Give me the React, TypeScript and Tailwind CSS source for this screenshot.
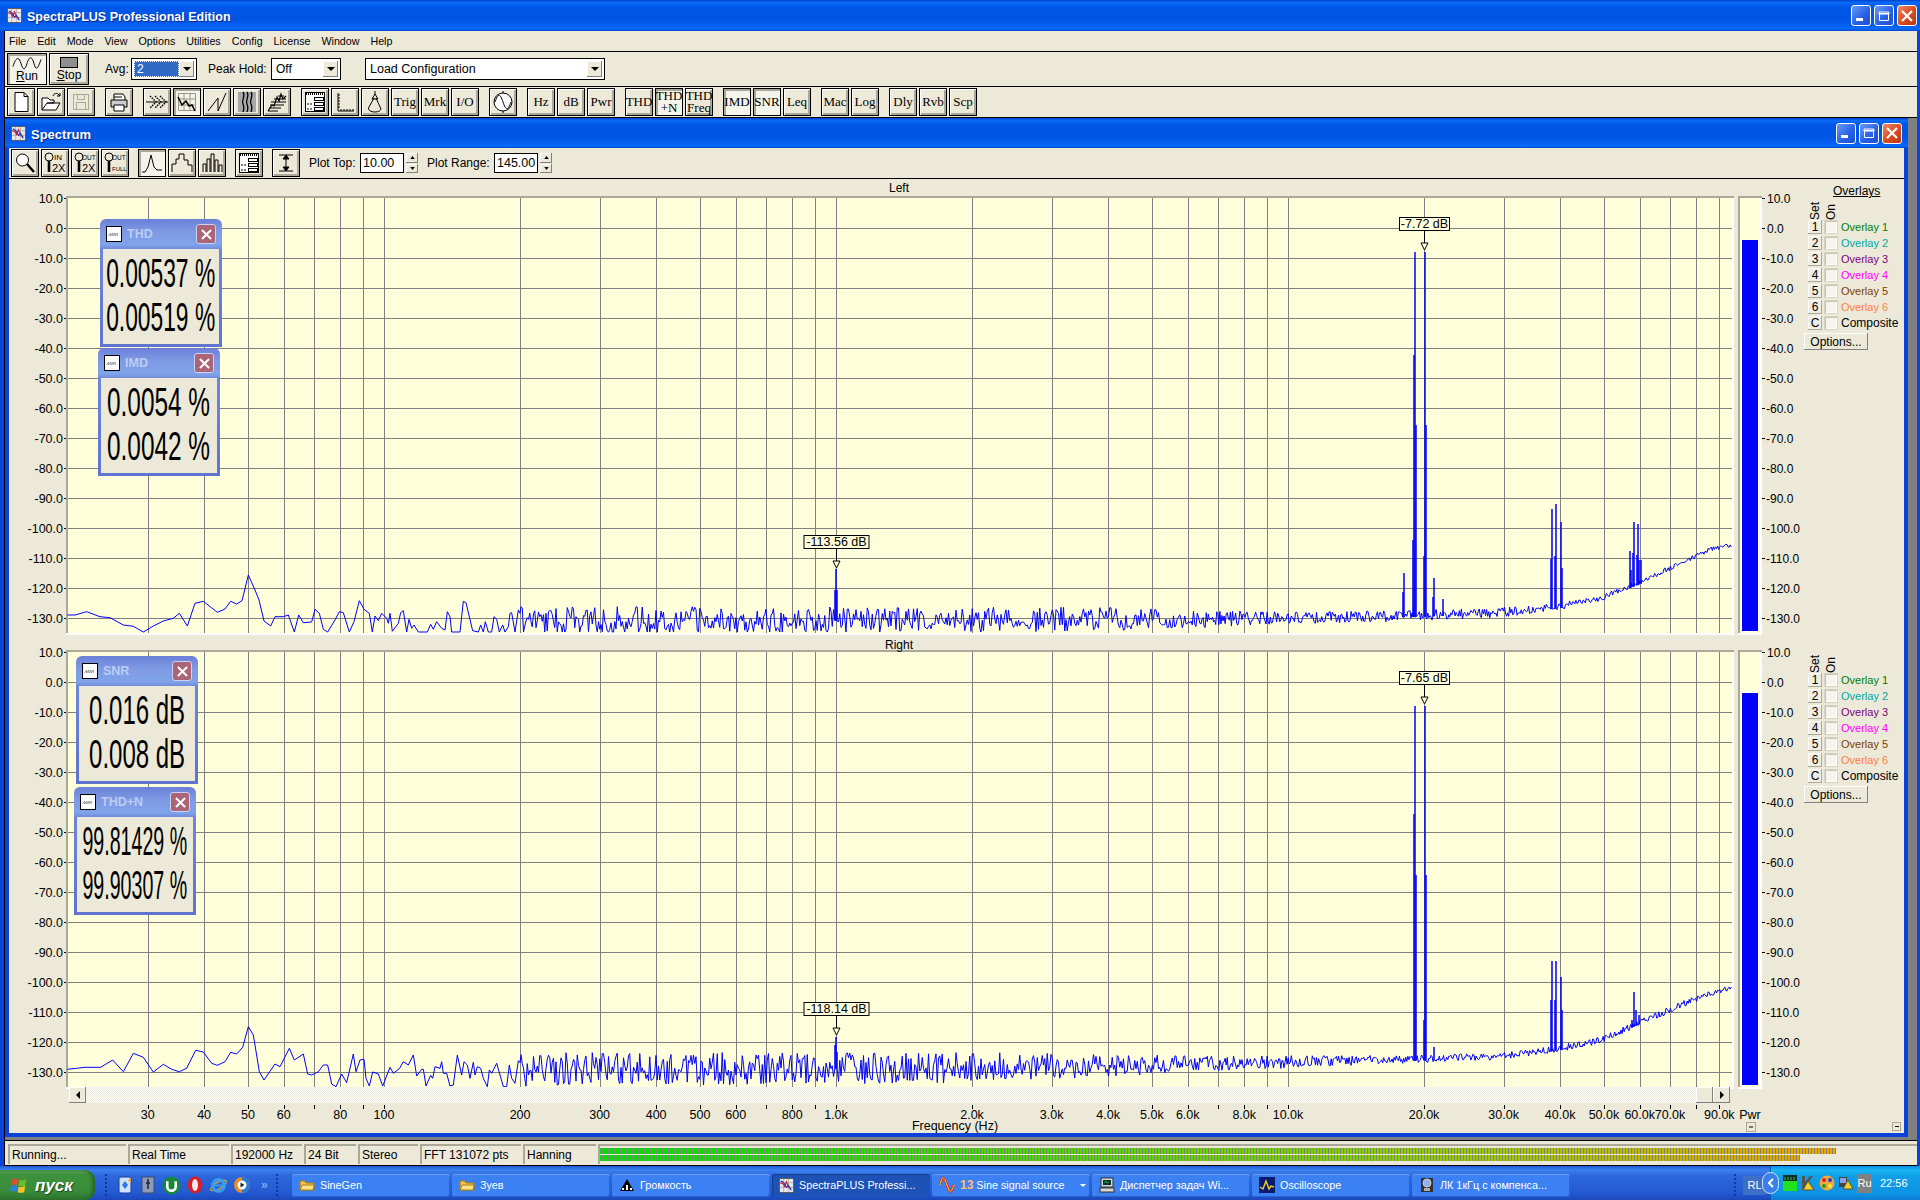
import React from "react";

const xOf = (f: number) => 384 + 452 * (Math.log10(f) - 2);
const gridFreqs: number[] = [];
[10, 100, 1000, 10000].forEach((d) => {
  for (let m = d === 10 ? 3 : 1; m <= 9; m++) gridFreqs.push(m * d);
});

type P = [number, number];
const lerp = (tbl: P[], x: number) => {
  if (x <= tbl[0][0]) return tbl[0][1];
  for (let i = 1; i < tbl.length; i++) {
    if (x <= tbl[i][0]) {
      const [a, b] = tbl[i - 1];
      const [c, d] = tbl[i];
      return b + ((d - b) * (x - a)) / (c - a);
    }
  }
  return tbl[tbl.length - 1][1];
};
const rngOf = (seed: number) => () => {
  seed = (seed + 0x6d2b79f5) | 0;
  let t = Math.imul(seed ^ (seed >>> 15), 1 | seed);
  t = (t + Math.imul(t ^ (t >>> 7), 61 | t)) ^ t;
  return ((t ^ (t >>> 14)) >>> 0) / 4294967296;
};

const lowL: P[] = [[22,165],[45,165],[80,155],[120,170],[150,173],[190,195],[220,199],[250,216],[280,198],[310,183],[340,175],[358,160],[382,198],[405,130],[430,124],[472,157],[495,147],[512,124],[530,132],[546,122],[565,45],[585,90],[597,120],[612,183],[632,198],[645,170],[670,170],[685,165],[703,216],[716,165],[730,188],[755,186],[765,148],[778,160],[790,208],[803,216],[825,180],[838,155],[850,158],[868,216],[882,185],[898,122],[912,148],[928,160],[937,216],[945,168],[955,182],[965,160],[980,175],[985,190],[990,160],[997,214],[1015,190],[1022,158],[1030,152],[1040,216],[1047,178],[1055,205],[1062,195],[1075,216],[1102,216],[1112,193],[1120,208],[1130,185],[1145,205],[1155,210],[1162,155],[1170,170],[1175,216],[1200,216],[1210,124],[1218,128],[1238,212],[1255,216],[1262,195],[1270,216],[1276,185],[1285,216],[1295,216],[1302,170],[1310,178],[1318,216],[1328,195],[1335,216],[1345,200],[1350,160],[1355,158],[1365,216],[1375,150],[1380,160]];
const lowR: P[] = [[22,178],[50,175],[75,172],[122,172],[158,150],[190,185],[220,130],[250,142],[280,186],[310,163],[335,178],[358,185],[380,175],[407,121],[430,126],[455,160],[472,166],[495,155],[512,127],[530,132],[548,112],[565,50],[580,75],[598,185],[612,210],[645,162],[660,170],[688,115],[703,150],[730,132],[743,192],[755,195],[775,185],[790,165],[803,165],[815,222],[828,230],[845,192],[860,218],[880,132],[888,185],[900,150],[912,148],[918,205],[928,228],[938,186],[955,192],[968,228],[990,172],[1000,190],[1018,176],[1030,155],[1045,165],[1060,135],[1070,198],[1085,178],[1090,178],[1098,228],[1112,196],[1118,205],[1125,170],[1140,175],[1145,155],[1150,190],[1160,190],[1170,228],[1180,225],[1192,135],[1205,195],[1212,155],[1222,165],[1230,205],[1240,157],[1245,195],[1252,170],[1262,175],[1270,205],[1282,230],[1288,180],[1295,190],[1310,160],[1320,195],[1330,230],[1340,230],[1348,165],[1355,205],[1365,220],[1375,152],[1380,158]];

const baseL: P[] = [[520,619],[1200,618],[1380,616],[1500,612],[1560,606],[1600,598],[1640,582],[1680,563],[1710,549],[1732,545]];
const ampL: P[] = [[520,14],[1100,12],[1300,6],[1500,5],[1600,3],[1732,2]];
const baseR: P[] = [[520,1068],[1000,1066],[1200,1063],[1400,1059],[1500,1056],[1560,1048],[1600,1040],[1640,1022],[1680,1005],[1710,993],[1732,988]];
const ampR: P[] = [[520,17],[1000,15],[1200,8],[1400,4],[1732,3]];

const spikesL: P[] = [[835,590],[836,569],[837,590],[1404,573],[1403,592],[1414,355],[1413,540],[1415,252],[1416,425],[1424,556],[1425,252],[1426,425],[1433,597],[1434,578],[1443,599],[1551,559],[1552,509],[1555,556],[1556,504],[1561,522],[1562,568],[1630,551],[1631,570],[1633,553],[1634,522],[1637,555],[1638,524],[1639,560],[1641,560]];
const spikesR: P[] = [[835,1045],[836,1037],[837,1052],[1414,814],[1415,706],[1416,875],[1424,1020],[1425,706],[1426,875],[1434,1047],[1551,1000],[1552,961],[1555,1000],[1556,961],[1561,977],[1562,1010],[1632,1020],[1634,992],[1636,1010],[1639,1015]];

const buildPath = (low: P[], ox: number, oy: number, base: P[], amp: P[], spikes: P[], clip: number, seed: number) => {
  const r = rngOf(seed);
  const pts: P[] = low.map(([a, b]) => [ox + a / 3, oy + b / 3]);
  let x = 521;
  while (x < 1732) {
    const blocked = spikes.some(([sx]) => Math.abs(sx - x) < 0.45);
    const n = (r() - 0.45) * 2;
    const y = Math.min(clip, lerp(base, x) + n * lerp(amp, x));
    if (!blocked) pts.push([x, y]);
    x += x < 1200 ? 1.25 : 1.05;
  }
  spikes.forEach(([sx, sy]) => {
    const b = lerp(base, sx) + 2;
    pts.push([sx - 0.15, b], [sx, sy], [sx + 0.15, b]);
  });
  pts.sort((a, b) => a[0] - b[0]);
  return "M" + pts.map(([a, b]) => `${a.toFixed(2)} ${b.toFixed(1)}`).join("L");
};

const Marker = ({ x, tip, label, w }: { x: number; tip: number; label: string; w: number }) => (
  <g>
    <path d={`M${x + 0.5} ${tip - 21}V${tip - 8}`} stroke="#000" />
    <path d={`M${x - 3} ${tip - 8}h7l-3.5 7z`} fill="#ffffdc" stroke="#000" />
    <rect x={x - w / 2 + 0.5} y={tip - 34 + 0.5} width={w} height={13} fill="#ffffdc" stroke="#000" />
    <text x={x + 0.5} y={tip - 23} textAnchor="middle" fontSize={12.5} fill="#000">{label}</text>
  </g>
);

const Chart = ({ top, h, plotTop, title, d, axis, markers }: { top: number; h: number; plotTop: number; title: string; d: string; axis?: boolean; markers: React.ReactNode }) => {
  const plotBot = plotTop + 435;
  const dbs = Array.from({ length: 15 }, (_, i) => 10 - i * 10);
  const xLabels: [number, string][] = [[30,"30"],[40,"40"],[50,"50"],[60,"60"],[80,"80"],[100,"100"],[200,"200"],[300,"300"],[400,"400"],[500,"500"],[600,"600"],[800,"800"],[1000,"1.0k"],[2000,"2.0k"],[3000,"3.0k"],[4000,"4.0k"],[5000,"5.0k"],[6000,"6.0k"],[8000,"8.0k"],[10000,"10.0k"],[20000,"20.0k"],[30000,"30.0k"],[40000,"40.0k"],[50000,"50.0k"],[60000,"60.0k"],[70000,"70.0k"],[90000,"90.0k"]];
  return (
    <svg viewBox={`9 ${top} 1729 ${h}`} className="w-[1729px] shrink-0 block" style={{ height: h }}>
      <rect x={66} y={plotTop - 2} width={1668} height={439} fill="#fff" />
      <path d={`M66 ${plotBot}V${plotTop - 2}H1734V${plotTop}H68V${plotBot}z`} fill="#aca899" />
      <rect x={68} y={plotTop} width={1664} height={435} fill="#ffffdc" />
      {dbs.slice(1).map((v, i) => (
        <path key={v} d={`M68 ${plotTop + 30 * (i + 1) + 0.5}H1732`} stroke="#808080" shapeRendering="crispEdges" />
      ))}
      {gridFreqs.map((f) => (
        <path key={f} d={`M${Math.round(xOf(f)) + 0.5} ${plotTop}V${plotBot}`} stroke="#808080" shapeRendering="crispEdges" />
      ))}
      <path d={d} fill="none" stroke="#0000ff" strokeWidth={1} strokeLinejoin="round" />
      {markers}
      {dbs.map((v, i) => (
        <g key={v}>
          <path d={`M64 ${plotTop + 30 * i + 0.5}h2`} stroke="#000" shapeRendering="crispEdges" />
          <text x={63} y={plotTop + 30 * i + 5} textAnchor="end" fontSize={12.5} fill="#000">{v.toFixed(1)}</text>
        </g>
      ))}
      <text x={899} y={top + 13} textAnchor="middle" fontSize={12} fill="#000">{title}</text>
      {axis && (
        <g>
          {gridFreqs.map((f) => (
            <path key={f} d={`M${Math.round(xOf(f)) + 0.5} 1105v4`} stroke="#000" shapeRendering="crispEdges" />
          ))}
          {xLabels.map(([f, s]) => (
            <text key={f} x={xOf(f)} y={1119} textAnchor="middle" fontSize={12.5} fill="#000">{s}</text>
          ))}
          <text x={955} y={1130} textAnchor="middle" fontSize={12.5} fill="#000">Frequency (Hz)</text>
        </g>
      )}
    </svg>
  );
};

const PowerMeter = ({ top, h, plotTop, fillTop, pwr }: { top: number; h: number; plotTop: number; fillTop: number; pwr?: boolean }) => {
  const bot = plotTop + 435;
  const dbs = Array.from({ length: 15 }, (_, i) => 10 - i * 10);
  return (
    <svg viewBox={`1738 ${top} 62 ${h}`} className="w-[62px] shrink-0 block overflow-visible" style={{ height: h }}>
      <rect x={1738} y={plotTop - 2} width={24} height={439} fill="#fff" />
      <path d={`M1738 ${bot}V${plotTop - 2}H1762V${plotTop}H1740V${bot}z`} fill="#aca899" />
      <rect x={1740} y={plotTop} width={20} height={435} fill="#ffffdc" />
      <rect x={1742} y={fillTop} width={16} height={bot - 2 - fillTop} fill="#0000ff" />
      {dbs.map((v, i) => (
        <g key={v}>
          <path d={`M1762 ${plotTop + 30 * i + 0.5}h3`} stroke="#000" shapeRendering="crispEdges" />
          <text x={v < 0 ? 1766 : 1767} y={plotTop + 30 * i + 5} fontSize={12} fill="#000">{v.toFixed(1)}</text>
        </g>
      ))}
      {pwr && (
        <g>
          <text x={1750} y={1119} textAnchor="middle" fontSize={12.5} fill="#000">Pwr</text>
          <rect x={1746.5} y={1122.5} width={9} height={9} fill="#ece9d8" stroke="#aca899" />
          <path d="M1749 1127h4" stroke="#000" />
        </g>
      )}
    </svg>
  );
};

const overlays: [string, string][] = [
  ["1", "Overlay 1|#008000"],
  ["2", "Overlay 2|#00a8a8"],
  ["3", "Overlay 3|#800080"],
  ["4", "Overlay 4|#ff00ff"],
  ["5", "Overlay 5|#804000"],
  ["6", "Overlay 6|#ff8040"],
];

const MiniBtn = ({ children }: { children: React.ReactNode }) => (
  <div className="w-[14px] h-[14px] bg-[#f0eee2] shadow-[inset_-1px_-1px_0_#aca899,inset_1px_1px_0_#fff] flex items-center justify-center text-[12px] leading-none">{children}</div>
);
const Check = () => <div className="w-[14px] h-[14px] bg-[#f6f4ec] shadow-[inset_1px_1px_0_#c8c4b0,inset_-1px_-1px_0_#fff] border border-[#d8d4c4]" />;

const OverlayCol = ({ rightPanel }: { rightPanel?: boolean }) => (
  <div className={rightPanel ? "flex-1 flex flex-col pt-[3px] text-black" : "flex-1 flex flex-col pt-[6px] text-black"}>
    <div className="h-[13px] ml-[33px] text-[12px] leading-[13px] underline">{rightPanel ? "" : "Overlays"}</div>
    <div className={rightPanel ? "h-[20px] flex pl-[8px] gap-[2px] mt-[1px]" : "h-[20px] flex pl-[8px] gap-[2px] mt-[2px]"}>
      <div className="w-[14px] flex justify-center"><span className="[writing-mode:vertical-rl] rotate-180 text-[12px] leading-[14px]">Set</span></div>
      <div className="w-[14px] flex justify-center"><span className="[writing-mode:vertical-rl] rotate-180 text-[12px] leading-[14px]">On</span></div>
    </div>
    <div className="flex flex-col gap-[2px] pl-[8px]">
      {overlays.map(([n, v]) => {
        const [lab, col] = v.split("|");
        return (
          <div key={n} className="flex items-center h-[14px] gap-[2px]">
            <MiniBtn>{n}</MiniBtn>
            <Check />
            <span className="ml-[1px] text-[11px] leading-none" style={{ color: col }}>{lab}</span>
          </div>
        );
      })}
      <div className="flex items-center h-[14px] gap-[2px]">
        <MiniBtn>C</MiniBtn>
        <Check />
        <span className="ml-[1px] text-[12px] leading-none">Composite</span>
      </div>
    </div>
    <div className="ml-[4px] mt-[3px] w-[64px] h-[17px] bg-[#ece9d8] shadow-[inset_-1px_-1px_0_#808080,inset_1px_1px_0_#fff] flex items-center justify-center text-[12px] leading-none">Options...</div>
    {rightPanel && (
      <div className="mt-auto self-end mr-[3px] mb-[2px] w-[9px] h-[9px] border border-[#aca899] flex items-center justify-center">
        <div className="w-[4px] h-px bg-black" />
      </div>
    )}
  </div>
);

const CloseIcon = () => (
  <svg viewBox="0 0 12 12" className="w-[11px] h-[11px]"><path d="M1 1l10 10M11 1L1 11" stroke="#fff" strokeWidth={2.2} /></svg>
);

const Float = ({ pos, title, vals, sc }: { pos: string; title: string; vals: string[]; sc: string }) => (
  <div className={"absolute w-[122px] h-[128px] rounded-t-[6px] bg-[linear-gradient(180deg,#6a80d8_0%,#7f9ae4_10%,#7fa4ea_20%,#6f86d8_24%,#5f74cf_100%)] p-[3px] pt-0 flex flex-col " + pos}>
    <div className="h-[30px] shrink-0 flex items-center gap-[5px] pl-[3px] pr-[3px]">
      <svg viewBox="0 0 16 16" className="w-[16px] h-[16px] shrink-0"><rect x={0.5} y={0.5} width={15} height={15} fill="#fff" stroke="#000" /><path d="M2.5 10l2.2-3v3l2.2-3v3l2.2-3v3l2.2-3v3" fill="none" stroke="#777" strokeWidth={0.7} /></svg>
      <span className="flex-1 text-[12.5px] font-semibold text-[#bccdf4] leading-none">{title}</span>
      <div className="w-[20px] h-[20px] rounded-[3px] bg-[#ab6577] border border-[#c9d3f3] flex items-center justify-center"><CloseIcon /></div>
    </div>
    <div className="flex-1 bg-[#ece9d8] flex flex-col items-center pt-[2px] text-black">
      {vals.map((v) => (
        <div key={v} className="h-[44px] flex items-center justify-center w-full">
          <span className={"inline-block text-[40px] leading-none whitespace-nowrap " + sc}>{v}</span>
        </div>
      ))}
    </div>
  </div>
);

/* ---------- toolbar ---------- */
const Btn = ({ pressed, children, wide }: { pressed?: boolean; children: React.ReactNode; wide?: boolean }) => (
  <div
    className={
      (wide ? "w-[40px] h-[32px] " : "w-[28px] h-[28px] ") +
      (pressed
        ? "bg-[#f5f4ea] border border-black shadow-[inset_2px_2px_0_#aca899] "
        : "bg-[#ece9d8] border border-black shadow-[inset_1px_1px_0_#fff,inset_-2px_-2px_0_#aca899] ") +
      "shrink-0 flex flex-col items-center justify-center overflow-hidden text-black"
    }
  >
    {children}
  </div>
);
const Ico = ({ children }: { children: React.ReactNode }) => (
  <svg viewBox="0 0 24 24" className="w-[24px] h-[24px]" fill="none" stroke="#000" strokeWidth={1}>{children}</svg>
);
const SerifB = ({ children }: { children: React.ReactNode }) => (
  <span className="[font-family:'Liberation_Serif',serif] text-[13px] leading-[12px] text-center">{children}</span>
);
const WinList = () => (
  <Ico>
    <rect x={2.5} y={2.5} width={19} height={19} fill="#fff" />
    <path d="M3 4h18" strokeWidth={2} strokeDasharray="1 1" />
    <rect x={11.5} y={7.5} width={9} height={3} /><rect x={11.5} y={12.5} width={9} height={3} /><rect x={11.5} y={17.5} width={9} height={3} />
    <path d="M4 14h2M7 14h2M4 19h2M7 19h2" />
  </Ico>
);
const Grp = ({ children, ml }: { children: React.ReactNode; ml: string }) => <div className={"flex gap-[2px] " + ml}>{children}</div>;

const Combo = ({ w, children }: { w: string; children: React.ReactNode }) => (
  <div className={"h-[22px] bg-white border border-black flex items-center p-[2px] shrink-0 " + w}>
    <div className="flex-1 min-w-0 h-full flex items-center text-[12px]">{children}</div>
    <div className="w-[15px] h-[16px] bg-[#ece9d8] shadow-[inset_-1px_-1px_0_#808080,inset_1px_1px_0_#fff] flex items-center justify-center">
      <svg viewBox="0 0 8 4" className="w-[8px] h-[4px]"><path d="M0 0h8L4 4z" fill="#000" /></svg>
    </div>
  </div>
);
const Spin = () => (
  <div className="w-[12px] h-[20px] flex flex-col gap-px shrink-0">
    {["M0 4h6L3 0z", "M0 0h6L3 4z"].map((d) => (
      <div key={d} className="flex-1 bg-[#ece9d8] shadow-[inset_-1px_-1px_0_#808080,inset_1px_1px_0_#fff] flex items-center justify-center">
        <svg viewBox="0 0 6 4" className="w-[5px] h-[3px]"><path d={d} fill="#000" /></svg>
      </div>
    ))}
  </div>
);
const WinBtn = ({ kind }: { kind: "min" | "max" | "close" }) => (
  <div
    className={
      (kind === "close"
        ? "bg-[linear-gradient(135deg,#e98a6a_0%,#df4e22_50%,#b93510_100%)] "
        : "bg-[linear-gradient(135deg,#6a9cf5_0%,#2a62e6_55%,#1e4fd0_100%)] ") +
      "w-[20px] h-[21px] rounded-[3px] border border-white flex items-center justify-center shrink-0"
    }
  >
    <svg viewBox="0 0 14 14" className="w-[14px] h-[14px]">
      {kind === "min" && <rect x={2} y={9} width={7} height={3} fill="#fff" />}
      {kind === "max" && <path d="M2.5 4.5h9v7h-9zM2 3h10v2H2z" fill="none" stroke="#fff" />}
      {kind === "close" && <path d="M2 2l10 10M12 2L2 12" stroke="#fff" strokeWidth={2.2} />}
    </svg>
  </div>
);
const TitleIcon = () => (
  <svg viewBox="0 0 16 16" className="w-[15px] h-[15px] shrink-0">
    <rect width={16} height={16} fill="#e8e8e8" />
    <rect x={0.5} y={0.5} width={15} height={15} fill="none" stroke="#555" />
    <path d="M5 1v14M10 1v14M1 5h14M1 10h14" stroke="#999" strokeWidth={0.7} />
    <path d="M1 5l3 1 2 3 2-5 2 5 3 3" fill="none" stroke="#e02020" strokeWidth={1.2} />
    <path d="M2 3l3 2 3 5 2-2 3 5" fill="none" stroke="#2030c0" strokeWidth={1.2} />
  </svg>
);

const statusPane = "h-[20px] mt-[3px] shrink-0 border-t-2 border-l-2 border-[#aca899] pl-[2px] flex items-center text-[12px] text-black leading-none whitespace-nowrap";

const Meter = () => {
  const rows: [number, number][] = [[2, 412], [9, 400]];
  const col = (i: number) => {
    const t = i / 412;
    const r = t < 0.7 ? Math.round((t / 0.7) * 150) : Math.round(150 + ((t - 0.7) / 0.3) * 85);
    const g = t < 0.7 ? Math.round(225 - (t / 0.7) * 20) : Math.round(205 - ((t - 0.7) / 0.3) * 40);
    return `rgb(${r},${g},0)`;
  };
  return (
    <svg viewBox="0 0 1300 16" className="w-[1300px] h-[16px] block" shapeRendering="crispEdges">
      {rows.map(([y, cnt], k) =>
        Array.from({ length: cnt }, (_, i) => (
          <g key={k + "-" + i}>
            <rect x={i * 3} y={y} width={3} height={6} fill="#808080" />
            <rect x={i * 3} y={y} width={2} height={6} fill={col(i)} />
          </g>
        ))
      )}
    </svg>
  );
};

const Folder = () => (
  <svg viewBox="0 0 16 16" className="w-[16px] h-[16px] shrink-0"><path d="M1 13V4h5l1 2h8v7z" fill="#f5c84a" stroke="#a87a10" /><path d="M1 13l2-5h12l-1 5z" fill="#ffe48a" stroke="#a87a10" /></svg>
);
const taskBtnBase = "w-[158px] h-[23px] rounded-[3px] flex items-center gap-[5px] px-[7px] text-[10.8px] text-white whitespace-nowrap overflow-hidden shrink-0 ";
const Task = ({ active, icon, children }: { active?: boolean; icon: React.ReactNode; children: React.ReactNode }) => (
  <div className={taskBtnBase + (active ? "bg-[#1e52b7] shadow-[inset_1px_1px_1px_#143c8c]" : "bg-[#3c81f3] shadow-[inset_0_1px_0_#6a9ff7,inset_-1px_-1px_0_#2a62d0]")}>
    {icon}
    {children}
  </div>
);
const Grip = () => <div className="w-[3px] h-[22px] border-l-2 border-dotted border-[#0f3a9c] shrink-0" />;

const pathL = buildPath(lowL, 60, 560, baseL, ampL, spikesL, 632, 7);
const pathR = buildPath(lowR, 60, 1010, baseR, ampR, spikesR, 1087, 19);

export default function App() {
  const titleGrad = "bg-[linear-gradient(180deg,#0342cf_0%,#0a6af5_8%,#0058e8_22%,#0054e3_60%,#0660f2_85%,#0a6cf8_93%,#0446cc_100%)]";
  return (
    <div className="w-[1920px] h-[1200px] flex flex-col overflow-hidden bg-[#808080] [font-family:'Liberation_Sans',Arial,sans-serif]">
      {/* outer title */}
      <div className={"h-[31px] shrink-0 flex items-center pl-[7px] pr-[3px] gap-[5px] " + titleGrad}>
        <TitleIcon />
        <span className="flex-1 text-[12.5px] font-bold text-white leading-none pt-[4px] [text-shadow:1px_1px_0_#0a2a90]">SpectraPLUS Professional Edition</span>
        <div className="flex gap-[3px]"><WinBtn kind="min" /><WinBtn kind="max" /><WinBtn kind="close" /></div>
      </div>

      <div className="h-[1135px] shrink-0 flex">
        <div className="w-[4px] shrink-0 bg-[#0a43dc]" />
        <div className="flex-1 min-w-0 flex flex-col border-l border-black">
          {/* menu */}
          <div className="h-[21px] shrink-0 bg-[#ece9d8] border-b border-black flex items-center gap-[11px] pl-[4px] text-[10.7px] text-black leading-none">
            {["File","Edit","Mode","View","Options","Utilities","Config","License","Window","Help"].map((m) => <span key={m}>{m}</span>)}
          </div>
          {/* row 1 */}
          <div className="h-[35px] shrink-0 bg-[#ece9d8] border-b border-black flex items-center pl-[2px] text-black">
            <div className="flex gap-[2px]">
              <Btn pressed wide>
                <svg viewBox="0 0 30 12" className="w-[30px] h-[13px]"><path d="M1 9C4 -1 7 -1 9 6s4 7 6 0 5-8 7 0 4 5 7-4" fill="none" stroke="#000" /></svg>
                <span className="text-[12px] leading-[12px]"><span className="underline">R</span>un</span>
              </Btn>
              <Btn wide>
                <div className="w-[18px] h-[11px] bg-[#8f8f8f] border border-black mb-[1px]" />
                <span className="text-[12px] leading-[12px]"><span className="underline">S</span>top</span>
              </Btn>
            </div>
            <span className="ml-[16px] w-[26px] text-[12px]">Avg:</span>
            <Combo w="w-[66px]">
              <div className="w-full h-full bg-[#316ac5] text-white pl-[2px] border border-dotted border-white flex items-center">2</div>
            </Combo>
            <span className="ml-[11px] w-[63px] text-[12px] whitespace-nowrap">Peak Hold:</span>
            <Combo w="w-[70px]"><span className="pl-[2px]">Off</span></Combo>
            <div className="ml-[24px]"><Combo w="w-[240px]"><span className="pl-[2px] text-[12.5px]">Load Configuration</span></Combo></div>
          </div>
          {/* row 2 */}
          <div className="h-[31px] shrink-0 bg-[#ece9d8] border-b border-black flex items-start pt-px pl-[2px]">
            <Grp ml="">
              <Btn><Ico><path d="M6 2.5h9l4 4v15H6z" fill="#fff" /><path d="M15 2.5v4h4" /></Ico></Btn>
              <Btn><Ico><path d="M3 20V8h6l2 2h4v3H8L3 20zM3 20h14l4-7H8" fill="#fff" /><path d="M14 6c1-3 4-3 5-2l2 2M21 3v3h-3" /></Ico></Btn>
              <Btn><Ico><g stroke="#aca899"><rect x={4.5} y={4.5} width={15} height={15} /><rect x={8.5} y={4.5} width={7} height={5} /><rect x={7.5} y={12.5} width={9} height={7} /></g></Ico></Btn>
            </Grp>
            <Grp ml="ml-[10px]">
              <Btn><Ico><path d="M7 10V4h9l2 3v3" fill="#fff" /><path d="M4 10h16v7H4z" fill="#ccc" /><path d="M7 15v6h10v-6z" fill="#fff" /><path d="M7 7h8" /></Ico></Btn>
            </Grp>
            <Grp ml="ml-[10px]">
              <Btn><Ico><path d="M1 12h22" /><path d="M5 6l6 6-6 6M10 6l6 6-6 6M15 6l6 6-6 6" strokeDasharray="1.5 1" strokeWidth={1.4} /></Ico></Btn>
              <Btn pressed><Ico><path d="M3.5 3.5h17v17h-17zM9 3.5v17M15 3.5v17M3.5 9h17M3.5 15h17" stroke="#9a9688" /><path d="M3 7l4 8 4-4 3 5 3-1 3 6" strokeWidth={1.6} /></Ico></Btn>
              <Btn><Ico><path d="M3 21L13 8v13L21 3" /></Ico></Btn>
              <Btn><Ico><rect x={3} y={2} width={18} height={20} fill="#a8a8a8" stroke="none" /><path d="M8 2c3 4-2 8 0 12s1 5 0 8M12 2c3 4-2 8 0 12s1 5 0 8M16 2c3 4-2 8 0 12s1 5 0 8" strokeWidth={1.3} /></Ico></Btn>
              <Btn><Ico><path d="M3 21h10M4 18h12M5 15h14M6 12h15M9 9h12M13 6h6" /><path d="M3 21l4-6 2 1 3-9 2 4 2-7 2 5 3-3" strokeWidth={1.2} /></Ico></Btn>
            </Grp>
            <Grp ml="ml-[10px]">
              <Btn><WinList /></Btn>
              <Btn><Ico><path d="M5 3v18h16M5 5h2M5 8h2M5 11h2M5 14h2M5 17h2M8 21v-2M11 21v-2M14 21v-2M17 21v-2M20 21v-2" /></Ico></Btn>
              <Btn><Ico><path d="M12 1v3" /><path d="M9 9l3-5 3 5z" /><path d="M11 8L6 17M13 8l5 11" /><path d="M6 17c-2 3 2 5 6 5s6-2 6-3" /></Ico></Btn>
              <Btn><SerifB>Trig</SerifB></Btn>
              <Btn><SerifB>Mrk</SerifB></Btn>
              <Btn><SerifB>I/O</SerifB></Btn>
            </Grp>
            <Grp ml="ml-[10px]">
              <Btn><Ico><circle cx={12} cy={12} r={9} fill="#fff" /><path d="M4 12c3-9 5-9 8 0s5 9 8 0" /><path d="M12 1v2M12 21v2" /></Ico></Btn>
            </Grp>
            <Grp ml="ml-[10px]">
              <Btn><SerifB>Hz</SerifB></Btn>
              <Btn><SerifB>dB</SerifB></Btn>
              <Btn><SerifB>Pwr</SerifB></Btn>
            </Grp>
            <Grp ml="ml-[10px]">
              <Btn><SerifB>THD</SerifB></Btn>
              <Btn pressed><SerifB>THD<br />+N</SerifB></Btn>
              <Btn><SerifB>THD<br />Freq</SerifB></Btn>
            </Grp>
            <Grp ml="ml-[10px]">
              <Btn pressed><SerifB>IMD</SerifB></Btn>
              <Btn pressed><SerifB>SNR</SerifB></Btn>
              <Btn><SerifB>Leq</SerifB></Btn>
            </Grp>
            <Grp ml="ml-[10px]">
              <Btn><SerifB>Mac</SerifB></Btn>
              <Btn><SerifB>Log</SerifB></Btn>
            </Grp>
            <Grp ml="ml-[10px]">
              <Btn><SerifB>Dly</SerifB></Btn>
              <Btn><SerifB>Rvb</SerifB></Btn>
              <Btn><SerifB>Scp</SerifB></Btn>
            </Grp>
          </div>

          {/* MDI */}
          <div className="flex-1 min-h-0 flex bg-[#808080] pb-[3px] pr-[9px]">
            <div className="flex-1 min-w-0 flex flex-col">
              <div className={"h-[30px] shrink-0 flex items-center pl-[6px] pr-[6px] gap-[5px] " + titleGrad}>
                <TitleIcon />
                <span className="flex-1 text-[13px] font-bold text-white leading-none pt-[3px] [text-shadow:1px_1px_0_#0a2a90]">Spectrum</span>
                <div className="flex gap-[3px]"><WinBtn kind="min" /><WinBtn kind="max" /><WinBtn kind="close" /></div>
              </div>
              <div className="flex-1 min-h-0 flex flex-col border-x-4 border-b-4 border-[#0a43dc] bg-[#ece9d8]">
                {/* spectrum toolbar */}
                <div className="h-[31px] shrink-0 border-b border-black flex items-start pt-px pl-[2px] text-black">
                  <Grp ml="">
                    <Btn><Ico><circle cx={9.5} cy={9} r={6} fill="#fff" /><path d="M14 13l7 8" strokeWidth={2.4} /></Ico></Btn>
                    <Btn><Ico><circle cx={6} cy={6} r={4} /><path d="M6 10v11" strokeWidth={2.6} /><text x={11} y={9} fontSize={8} stroke="none" fill="#000">IN</text><text x={9} y={21} fontSize={11} stroke="none" fill="#000">2X</text></Ico></Btn>
                    <Btn><Ico><circle cx={6} cy={6} r={4} /><path d="M6 10v11" strokeWidth={2.6} /><text x={9} y={9} fontSize={6.5} stroke="none" fill="#000">OUT</text><text x={9} y={21} fontSize={11} stroke="none" fill="#000">2X</text></Ico></Btn>
                    <Btn><Ico><circle cx={6} cy={6} r={4} /><path d="M6 10v11" strokeWidth={2.6} /><text x={9} y={9} fontSize={6.5} stroke="none" fill="#000">OUT</text><text x={9} y={20} fontSize={6} stroke="none" fill="#000">FULL</text></Ico></Btn>
                  </Grp>
                  <Grp ml="ml-[9px]">
                    <Btn pressed><Ico><path d="M2 21h3l3-5 3-12 3 12 3 3h5" /></Ico></Btn>
                    <Btn><Ico><path d="M2 21v-8h4V8h3V3h5v6h4v5h4v7" /></Ico></Btn>
                    <Btn><Ico><path d="M3 21V13h3v8M7 21V8h3v13M11 21V3h3v18M15 21V9h3v12M19 21V14h3v7" /></Ico></Btn>
                  </Grp>
                  <Grp ml="ml-[9px]"><Btn><WinList /></Btn></Grp>
                  <Grp ml="ml-[9px]">
                    <Btn><Ico><path d="M5 4h14M5 20h14M12 4v16" /><path d="M9 8l3-4 3 4zM9 16l3 4 3-4z" fill="#000" /></Ico></Btn>
                  </Grp>
                  <div className="h-[28px] flex items-center text-[12px]">
                    <span className="ml-[9px] w-[48px] whitespace-nowrap">Plot Top:</span>
                    <div className="ml-[3px] w-[44px] h-[20px] bg-white border border-black flex items-center pl-[2px] text-[12.5px]">10.00</div>
                    <div className="ml-[2px]"><Spin /></div>
                    <span className="ml-[9px] w-[63px] whitespace-nowrap">Plot Range:</span>
                    <div className="ml-[4px] w-[44px] h-[20px] bg-white border border-black flex items-center pl-[2px] text-[12.5px]">145.00</div>
                    <div className="ml-[2px]"><Spin /></div>
                  </div>
                </div>

                {/* Left */}
                <div className="h-[457px] shrink-0 flex relative">
                  <Chart
                    top={179} h={457} plotTop={198} title="Left" d={pathL}
                    markers={<>
                      <Marker x={836} tip={569} label="-113.56 dB" w={65} />
                      <Marker x={1424} tip={251} label="-7.72 dB" w={50} />
                    </>}
                  />
                  <PowerMeter top={179} h={457} plotTop={198} fillTop={240} />
                  <OverlayCol />
                  <Float pos="left-[91px] top-[40px]" title="THD" sc="scale-x-[0.57]" vals={["0.00537 %", "0.00519 %"]} />
                  <Float pos="left-[89px] top-[169px]" title="IMD" sc="scale-x-[0.61]" vals={["0.0054 %", "0.0042 %"]} />
                </div>

                {/* Right */}
                <div className="flex-1 min-h-0 flex relative">
                  <Chart
                    top={636} h={497} plotTop={652} title="Right" d={pathR} axis
                    markers={<>
                      <Marker x={836} tip={1036} label="-118.14 dB" w={65} />
                      <Marker x={1424} tip={705} label="-7.65 dB" w={50} />
                    </>}
                  />
                  <PowerMeter top={636} h={497} plotTop={652} fillTop={693} pwr />
                  <OverlayCol rightPanel />
                  <Float pos="left-[67px] top-[20px]" title="SNR" sc="scale-x-[0.6]" vals={["0.016 dB", "0.008 dB"]} />
                  <Float pos="left-[65px] top-[151px]" title="THD+N" sc="scale-x-[0.49]" vals={["99.81429 %", "99.90307 %"]} />
                  {/* scrollbar */}
                  <div className="absolute left-[60px] top-[451px] w-[1661px] h-[16px] flex bg-white">
                    <div className="w-[17px] bg-[#ece9d8] shadow-[inset_-1px_-1px_0_#808080,inset_1px_1px_0_#fff] flex items-center justify-center">
                      <svg viewBox="0 0 4 8" className="w-[4px] h-[8px]"><path d="M4 0v8L0 4z" fill="#000" /></svg>
                    </div>
                    <div className="flex-1 bg-[repeating-conic-gradient(#ece9d8_0%_25%,#fff_0%_50%)] bg-[length:2px_2px]" />
                    <div className="w-[17px] bg-[#ece9d8] shadow-[inset_-1px_-1px_0_#808080,inset_1px_1px_0_#fff]" />
                    <div className="w-[17px] bg-[#ece9d8] shadow-[inset_-1px_-1px_0_#808080,inset_1px_1px_0_#fff] flex items-center justify-center">
                      <svg viewBox="0 0 4 8" className="w-[4px] h-[8px]"><path d="M0 0v8l4-4z" fill="#000" /></svg>
                    </div>
                  </div>
                </div>
              </div>
            </div>
          </div>

          {/* status bar */}
          <div className="h-[26px] shrink-0 bg-[#ece9d8] border-y border-black flex pl-[3px] gap-[2px]">
            <div className={statusPane + " w-[118px]"}>Running...</div>
            <div className={statusPane + " w-[101px]"}>Real Time</div>
            <div className={statusPane + " w-[71px]"}>192000 Hz</div>
            <div className={statusPane + " w-[52px]"}>24 Bit</div>
            <div className={statusPane + " w-[60px]"}>Stereo</div>
            <div className={statusPane + " w-[101px]"}>FFT 131072 pts</div>
            <div className={statusPane + " w-[73px]"}>Hanning</div>
            <div className="mt-[3px] flex-1 min-w-0 h-[20px] border-t-2 border-l-2 border-[#aca899] overflow-hidden"><Meter /></div>
          </div>
        </div>
        <div className="w-[3px] shrink-0 bg-[#0a43dc]" />
      </div>

      {/* taskbar */}
      <div className="h-[34px] shrink-0 flex items-end bg-[linear-gradient(180deg,#1f5cd6_0%,#3c80f0_12%,#2c68dc_28%,#2459d2_78%,#1a48bc_100%)]">
        <div className="w-[95px] h-[30px] shrink-0 rounded-r-[10px] bg-[linear-gradient(180deg,#5aa35a_0%,#3d923d_15%,#3a8c3a_70%,#2c722c_100%)] flex items-center pl-[10px] gap-[6px] shadow-[inset_-3px_0_3px_#2a6a2a]">
          <svg viewBox="0 0 20 20" className="w-[19px] h-[19px] shrink-0">
            <path d="M2 4c3-2 5-1 7 0l-1 6c-2-1-4-2-7 0z" fill="#e0502a" />
            <path d="M10 4c2 1 4 1 7-1l-1 7c-3 1-5 1-7 0z" fill="#6abf2e" />
            <path d="M1 11c3-2 5-1 7 0l-1 6c-2-1-4-2-7 0z" fill="#2c80e0" />
            <path d="M9 11c2 1 4 1 7-1l-1 7c-3 1-5 1-7 0z" fill="#f4c420" />
          </svg>
          <span className="text-[17px] italic font-bold text-white leading-none [text-shadow:1px_1px_1px_#1a4a1a]">пуск</span>
        </div>
        <div className="w-[197px] shrink-0 h-[30px] flex items-center pl-[10px]">
          <Grip />
          <div className="flex items-center gap-[5px] ml-[8px]">
            <svg viewBox="0 0 18 18" className="w-[18px] h-[18px]"><rect x={3} y={1} width={12} height={16} rx={2} fill="#cfe2ff" stroke="#1a3f9c" /><path d="M6 9l3-4 3 4-3 4z" fill="#2a7ae0" /><path d="M12 4l3-2v5z" fill="#f0a020" /></svg>
            <svg viewBox="0 0 18 18" className="w-[18px] h-[18px]"><rect x={3} y={1} width={12} height={16} fill="#8d9ab8" stroke="#3a4a70" /><path d="M9 3v10M7 7h4" stroke="#223" strokeWidth={1.5} /></svg>
            <svg viewBox="0 0 18 18" className="w-[19px] h-[19px]"><circle cx={9} cy={9} r={8.5} fill="#178a3a" /><path d="M5 5v5a4 4 0 0 0 8 0V5" fill="none" stroke="#fff" strokeWidth={2.4} /></svg>
            <svg viewBox="0 0 18 18" className="w-[18px] h-[18px]"><ellipse cx={9} cy={9} rx={7.5} ry={8.5} fill="#d8202a" /><ellipse cx={9} cy={9} rx={3} ry={6} fill="#ffe8e8" /></svg>
            <svg viewBox="0 0 18 18" className="w-[19px] h-[19px]"><ellipse cx={9} cy={9} rx={8.5} ry={3} fill="none" stroke="#f0b020" transform="rotate(-30 9 9)" /><circle cx={9} cy={9} r={5.5} fill="none" stroke="#3a9cf0" strokeWidth={3} /><path d="M4 9h10" stroke="#3a9cf0" strokeWidth={2} /></svg>
            <svg viewBox="0 0 18 18" className="w-[18px] h-[18px]"><circle cx={9} cy={9} r={8} fill="#f08a20" /><path d="M9 1a8 8 0 0 1 0 16z" fill="#2a7ad0" /><circle cx={9} cy={9} r={4.5} fill="#fff" /><path d="M7.5 6.5v5l4-2.5z" fill="#222" /></svg>
          </div>
          <span className="ml-[10px] text-[12px] text-[#9fc0f5] leading-none">»</span>
          <div className="ml-[8px]"><Grip /></div>
        </div>
        <div className="flex gap-[2px] h-[30px] items-center">
          <Task icon={<Folder />}>SineGen</Task>
          <Task icon={<Folder />}>Зуев</Task>
          <Task icon={<svg viewBox="0 0 16 16" className="w-[16px] h-[16px] shrink-0"><path d="M1 14L8 2l7 12z" fill="#000" /><path d="M3 13h2v-2H3zM7 13h2V8H7zM11 13h2v-2h-2z" fill="#fff" /></svg>}>Громкость</Task>
          <Task active icon={<TitleIcon />}>SpectraPLUS Professi...</Task>
          <Task icon={<svg viewBox="0 0 16 16" className="w-[16px] h-[16px] shrink-0"><path d="M1 8c2-9 4-9 7 0s4 8 7 0" fill="none" stroke="#e02020" strokeWidth={2.6} /><path d="M1 8c2-9 4-9 7 0s4 8 7 0" fill="none" stroke="#ffe020" strokeWidth={1} /></svg>}>
            <span className="flex-1"><span className="font-bold text-[#ffc060] text-[12px]">13</span> Sine signal source</span>
            <svg viewBox="0 0 6 3" className="w-[6px] h-[3px] shrink-0 -mr-[3px]"><path d="M0 0h6L3 3z" fill="#fff" /></svg>
          </Task>
          <Task icon={<svg viewBox="0 0 16 16" className="w-[16px] h-[16px] shrink-0"><rect x={2} y={1} width={12} height={9} fill="#d8d8d8" stroke="#333" /><rect x={4} y={3} width={8} height={5} fill="#083030" /><path d="M5 6l2-2 1 2 2-1" stroke="#30e030" fill="none" strokeWidth={0.7} /><rect x={1} y={11} width={14} height={4} fill="#d8d8d8" stroke="#333" /></svg>}>Диспетчер задач Wi...</Task>
          <Task icon={<svg viewBox="0 0 16 16" className="w-[16px] h-[16px] shrink-0"><rect width={16} height={16} fill="#0a1a70" /><path d="M1 10l3 2 3-8 3 8 2-3 3 1" fill="none" stroke="#f0d020" strokeWidth={1.4} /></svg>}>Oscilloscope</Task>
          <Task icon={<svg viewBox="0 0 16 16" className="w-[16px] h-[16px] shrink-0"><rect x={2} y={1} width={12} height={14} fill="#333" /><circle cx={8} cy={6} r={4} fill="#8fb0f0" stroke="#ccc" /><rect x={5} y={11} width={6} height={3} fill="#aaa" /></svg>}>ЛК 1кГц с компенса...</Task>
        </div>
        <div className="flex-1 min-w-0 h-[30px] flex items-center justify-end pr-[6px]"><Grip /></div>
        <div className="h-[30px] shrink-0 flex items-center">
          <div className="w-[23px] h-[19px] bg-[#3f6fc4] text-white text-[11px] flex items-center justify-center leading-none">RL</div>
        </div>
        <div className="w-[150px] h-[34px] shrink-0 flex items-center ml-[4px] pl-[1px] gap-[3px] bg-[linear-gradient(180deg,#0f8ce4_0%,#18b4f2_12%,#109ee8_30%,#0e94e4_80%,#0c7cd4_100%)] border-l border-[#0a5cb0] text-white text-[11px]">
          <div className="w-[17px] h-[22px] -ml-[10px] rounded-full bg-[#3a80e8] border border-[#cfe2ff] flex items-center justify-center">
            <svg viewBox="0 0 6 10" className="w-[6px] h-[10px]"><path d="M5 1L1 5l4 4" fill="none" stroke="#fff" strokeWidth={2} /></svg>
          </div>
          <svg viewBox="0 0 14 16" className="w-[14px] h-[16px] shrink-0 ml-[1px]"><rect width={14} height={16} fill="#0c2c2c" /><rect y={6} width={14} height={10} fill="#20e020" /><path d="M2 2v3M5 2v3M8 2v3M11 2v3" stroke="#40c040" /></svg>
          <svg viewBox="0 0 16 16" className="w-[16px] h-[16px] shrink-0"><path d="M2 1h3v6l5-6h3L8 8l5 7H2z" fill="#555" /><path d="M8 6l6 9H3z" fill="#f0d020" stroke="#554" /></svg>
          <svg viewBox="0 0 16 16" className="w-[16px] h-[16px] shrink-0"><circle cx={8} cy={8} r={7.5} fill="#f0a840" /><circle cx={5} cy={5} r={2} fill="#e02020" /><circle cx={11} cy={5} r={2} fill="#2040e0" /><circle cx={5} cy={11} r={2} fill="#20a020" /><circle cx={11} cy={11} r={2} fill="#f0f020" /></svg>
          <svg viewBox="0 0 16 16" className="w-[16px] h-[16px] shrink-0"><rect x={1} y={2} width={8} height={10} fill="#444" /><rect x={2} y={3} width={6} height={5} fill="#8ca0e0" /><path d="M10 5l5 9H5z" fill="#f0d020" stroke="#554" /></svg>
          <div className="w-[15px] h-[19px] bg-[#808080] flex items-center justify-center text-[11px] leading-none">Ru</div>
          <span className="ml-[5px] text-[11px] leading-none">22:56</span>
        </div>
      </div>
    </div>
  );
}
